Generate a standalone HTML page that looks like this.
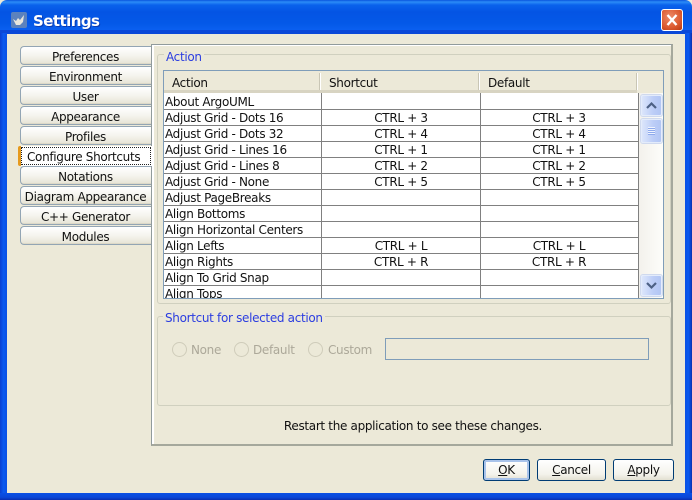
<!DOCTYPE html>
<html><head><meta charset="utf-8"><style>
html,body{margin:0;padding:0;width:692px;height:500px;overflow:hidden;background:#ECE9D8}
*{box-sizing:border-box}
body{position:relative;font:12px/16px "DejaVu Sans","Liberation Sans",sans-serif;color:#111;letter-spacing:-.32px}
.a{position:absolute}
.t{position:absolute;white-space:nowrap}
.tab{position:absolute;left:20px;width:132px;height:19px;padding-right:2px;border:1px solid #93a5b4;border-right:0;border-radius:4px 0 0 4px;background:linear-gradient(#fff,#f5f4ee 50%,#e6e3d4);text-align:center;line-height:20px;box-shadow:inset -1px -1px 0 #ddd9c8;white-space:nowrap}
.gb{position:absolute;border:1px solid #d0d0bf;border-radius:3px}
.gt{position:absolute;color:#2b3de0;background:#ECE9D8;padding:0 2px;white-space:nowrap;line-height:14px}
.row{position:absolute;left:164px;width:474px;height:16px;background:#fff;border-bottom:1px solid #808080;line-height:15px;overflow:hidden}
.row span{position:absolute;top:1px;white-space:nowrap}
.c1{left:1px}.c2{left:158px;width:158px;text-align:center}.c3{left:316px;width:158px;text-align:center}
.sb{position:absolute;border:1px solid #e4ecfb;border-radius:2px;background:linear-gradient(90deg,#dbe5fb,#bccdf7 60%,#b2c6f4);box-shadow:0 0 0 1px #cfd9ee}
.btn{position:absolute;top:459px;height:22px;border:1px solid #003c74;border-radius:3px;background:linear-gradient(#fff,#f4f3ec 70%,#e3e0d2);text-align:center;line-height:21px}
.radio{position:absolute;top:342px;width:15px;height:15px;border:1px solid #cfccba;border-radius:50%}
.d{position:absolute;top:342px;color:#aca899;white-space:nowrap}
u{text-underline-offset:1px}
</style></head><body>
<!-- window frame -->
<div class="a" style="left:0;top:0;width:692px;height:30px;background:linear-gradient(#0a55de 0,#2b8cf7 2px,#0a62ec 5px,#0454e4 12px,#0459e8 24px,#0a5ff0 30px);border-radius:7px 7px 0 0"></div>
<div class="a" style="left:0;top:30px;width:692px;height:4px;background:#0a48d8"></div>
<div class="a" style="left:0;top:33px;width:7px;height:467px;background:linear-gradient(90deg,#0a3fd0,#0a5af0 50%,#0a50e4)"></div>
<div class="a" style="right:0;top:33px;width:7px;height:467px;background:linear-gradient(90deg,#0a50e4,#0a5af0 50%,#0a2fb0)"></div>
<div class="a" style="left:0;top:493px;width:692px;height:7px;background:linear-gradient(#0a50e4,#0a48d8 60%,#0a2fb0)"></div>
<!-- title -->
<div class="a" style="left:11px;top:12px;width:16px;height:16px;background:#5b82bd;border-radius:2px"></div>
<svg class="a" style="left:11px;top:12px" width="16" height="16"><path d="M2 7 L5 9 L7 6 L9 8 L13 3 L12 10 L9 13 L5 13 Z" fill="#e8e6dc"/></svg>
<div class="t" style="left:33px;top:11px;font:bold 15px/20px 'DejaVu Sans',sans-serif;letter-spacing:-.55px;color:#fff;text-shadow:1px 1px 0 #0a3ab0">Settings</div>
<!-- close -->
<div class="a" style="left:661px;top:9px;width:22px;height:22px;border:1px solid #fff;border-radius:3px;background:radial-gradient(circle at 40% 35%,#ec8a68,#dc5a30 60%,#b83a12)"></div>
<svg class="a" style="left:661px;top:9px" width="22" height="22"><path d="M6.5 6 L15.5 16 M15.5 6 L6.5 16" stroke="#fff" stroke-width="2.4"/></svg>
<!-- tabs -->
<div class="tab" style="top:46px">Preferences</div>
<div class="tab" style="top:66px">Environment</div>
<div class="tab" style="top:86px">User</div>
<div class="tab" style="top:106px">Appearance</div>
<div class="tab" style="top:126px">Profiles</div>
<div class="tab" style="top:166px">Notations</div>
<div class="tab" style="top:186px">Diagram Appearance</div>
<div class="tab" style="top:206px">C++ Generator</div>
<div class="tab" style="top:226px">Modules</div>
<!-- panel -->
<div class="a" style="left:151px;top:44px;width:522px;height:402px;border:1px solid #919b9c;border-right:2px solid #a5a89c;border-bottom:2px solid #a5a89c;box-shadow:inset 2px 1px 0 #fff;background:#ECE9D8"></div>
<!-- selected tab -->
<div class="a" style="left:18px;top:146px;width:134px;height:20px;background:#fff;border-left:3px solid #e69a1e;border-radius:2px 0 0 2px"></div>
<div class="a" style="left:21px;top:147px;width:130px;height:18px;border:1px dotted #222"></div>
<div class="t" style="left:27px;top:149px">Configure Shortcuts</div>
<!-- action group -->
<div class="gb" style="left:157px;top:54px;width:514px;height:250px"></div>
<div class="gt" style="left:164px;top:50px">Action</div>
<!-- table -->
<div class="a" style="left:163px;top:70px;width:501px;height:229px;border:1px solid #7f9db9;background:#ECE9D8"></div>
<div class="a" style="left:164px;top:71px;width:473px;height:22px;background:#ECE9D8;border-bottom:3px solid #d8d4c2"></div>
<div class="a" style="left:319px;top:73px;width:1px;height:17px;background:#c9c6b5;box-shadow:1px 0 0 #fff"></div>
<div class="a" style="left:478px;top:73px;width:1px;height:17px;background:#c9c6b5;box-shadow:1px 0 0 #fff"></div>
<div class="a" style="left:636px;top:73px;width:1px;height:17px;background:#c9c6b5;box-shadow:1px 0 0 #fff"></div>
<div class="t" style="left:172px;top:75px">Action</div>
<div class="t" style="left:329px;top:75px">Shortcut</div>
<div class="t" style="left:488px;top:75px">Default</div>
<div class="a" style="left:164px;top:93px;width:474px;height:1px;background:#fff"></div>
<div class="row" style="top:94px"><span class="c1">About ArgoUML</span></div>
<div class="row" style="top:110px"><span class="c1">Adjust Grid - Dots 16</span><span class="c2">CTRL + 3</span><span class="c3">CTRL + 3</span></div>
<div class="row" style="top:126px"><span class="c1">Adjust Grid - Dots 32</span><span class="c2">CTRL + 4</span><span class="c3">CTRL + 4</span></div>
<div class="row" style="top:142px"><span class="c1">Adjust Grid - Lines 16</span><span class="c2">CTRL + 1</span><span class="c3">CTRL + 1</span></div>
<div class="row" style="top:158px"><span class="c1">Adjust Grid - Lines 8</span><span class="c2">CTRL + 2</span><span class="c3">CTRL + 2</span></div>
<div class="row" style="top:174px"><span class="c1">Adjust Grid - None</span><span class="c2">CTRL + 5</span><span class="c3">CTRL + 5</span></div>
<div class="row" style="top:190px"><span class="c1">Adjust PageBreaks</span></div>
<div class="row" style="top:206px"><span class="c1">Align Bottoms</span></div>
<div class="row" style="top:222px"><span class="c1">Align Horizontal Centers</span></div>
<div class="row" style="top:238px"><span class="c1">Align Lefts</span><span class="c2">CTRL + L</span><span class="c3">CTRL + L</span></div>
<div class="row" style="top:254px"><span class="c1">Align Rights</span><span class="c2">CTRL + R</span><span class="c3">CTRL + R</span></div>
<div class="row" style="top:270px"><span class="c1">Align To Grid Snap</span></div>
<div class="row" style="top:286px;height:12px;border-bottom:0"><span class="c1">Align Tops</span></div>
<div class="a" style="left:321px;top:93px;width:1px;height:205px;background:#808080"></div>
<div class="a" style="left:480px;top:93px;width:1px;height:205px;background:#808080"></div>
<div class="a" style="left:638px;top:93px;width:1px;height:205px;background:#808080"></div>
<!-- scrollbar -->
<div class="a" style="left:639px;top:93px;width:24px;height:205px;background:linear-gradient(90deg,#f3f1ec,#fdfdfa)"></div>
<div class="sb" style="left:641px;top:95px;width:21px;height:21px"></div>
<svg class="a" style="left:641px;top:95px" width="21" height="21"><path d="M6 13 L10.5 8.5 L15 13" fill="none" stroke="#4d6185" stroke-width="2.2"/></svg>
<div class="sb" style="left:641px;top:119px;width:21px;height:24px"></div>
<svg class="a" style="left:641px;top:119px" width="21" height="24"><path d="M7 8.5h7M7 10.5h7M7 12.5h7M7 14.5h7" stroke="#eef3fe" stroke-width="1"/><path d="M7 9.5h7M7 11.5h7M7 13.5h7M7 15.5h7" stroke="#8faaec" stroke-width="1"/></svg>
<div class="sb" style="left:641px;top:275px;width:21px;height:21px"></div>
<svg class="a" style="left:641px;top:275px" width="21" height="21"><path d="M6 8 L10.5 12.5 L15 8" fill="none" stroke="#4d6185" stroke-width="2.2"/></svg>
<!-- shortcut group -->
<div class="gb" style="left:157px;top:316px;width:514px;height:90px"></div>
<div class="gt" style="left:163px;top:311px">Shortcut for selected action</div>
<div class="radio" style="left:172px"></div><div class="d" style="left:191px">None</div>
<div class="radio" style="left:234px"></div><div class="d" style="left:253px">Default</div>
<div class="radio" style="left:308px"></div><div class="d" style="left:328px">Custom</div>
<div class="a" style="left:385px;top:338px;width:264px;height:22px;border:1px solid #7f9db9"></div>
<div class="t" style="left:153px;width:520px;top:418px;text-align:center">Restart the application to see these changes.</div>
<!-- buttons -->
<div class="btn" style="left:483px;width:47px;box-shadow:inset 0 0 0 2px #a9c3ea"><u>O</u>K</div>
<div class="btn" style="left:537px;width:69px"><u>C</u>ancel</div>
<div class="btn" style="left:613px;width:61px"><u>A</u>pply</div>
</body></html>
